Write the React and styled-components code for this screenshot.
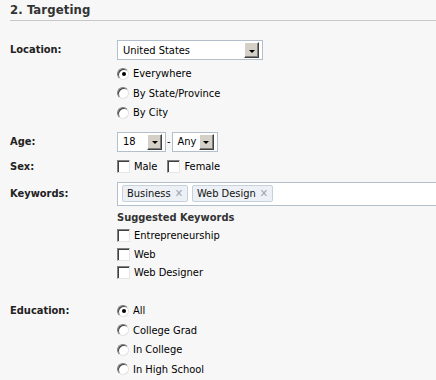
import React from 'react';
import styled, { createGlobalStyle } from 'styled-components';

const GlobalStyle = createGlobalStyle`
  html, body {
    margin: 0;
    padding: 0;
    background: #f7f7f7;
  }
  body {
    font-family: "DejaVu Sans Condensed", "DejaVu Sans", sans-serif;
    font-size: 11px;
    color: #000;
  }
`;

const Page = styled.div`
  width: 436px;
  height: 380px;
  overflow: hidden;
  padding-left: 10px;
  box-sizing: border-box;
`;

const Heading = styled.h2`
  margin: 0;
  padding-top: 2px;
  height: 18px;
  font-size: 13px;
  font-weight: bold;
  color: #333;
  letter-spacing: 0.1px;
  border-bottom: 1px solid #c8c8c8;
`;

const Form = styled.div`
  display: flex;
  flex-direction: column;
  padding-top: 19px;
`;

const Row = styled.div`
  display: flex;
  align-items: flex-start;
  margin-top: ${p => p.$gap || 0}px;
`;

const Label = styled.div`
  width: 107px;
  flex: none;
  font-weight: bold;
  color: #222;
  line-height: ${p => p.$line || 16}px;
`;

const Controls = styled.div`
  display: flex;
  flex-direction: column;
  flex: 1;
  min-width: 0;
`;

const Inline = styled.div`
  display: flex;
  align-items: center;
  height: ${p => p.$h || 16}px;
`;

const SelectBox = styled.div`
  display: flex;
  align-items: center;
  justify-content: space-between;
  box-sizing: border-box;
  width: ${p => p.$w}px;
  height: 20px;
  border: 1px solid #b3c0cc;
  background: #fff;
  padding: 0 3px 0 5px;
`;

const DropButton = styled.div`
  width: 15px;
  height: 16px;
  box-sizing: border-box;
  background: #d4d0c8;
  border-top: 1px solid #fff;
  border-left: 1px solid #fff;
  border-right: 1px solid #404040;
  border-bottom: 1px solid #404040;
  box-shadow: inset -1px -1px 0 #808080;
  display: flex;
  align-items: center;
  justify-content: center;
  &::after {
    content: '';
    width: 0;
    height: 0;
    margin-top: 2px;
    border-left: 3px solid transparent;
    border-right: 3px solid transparent;
    border-top: 3px solid #000;
  }
`;

const Dash = styled.span`
  margin: 0 1px;
`;

const OptionList = styled.div`
  display: flex;
  flex-direction: column;
  margin-top: ${p => p.$gap || 0}px;
`;

const Option = styled.label`
  display: flex;
  align-items: center;
  gap: 4px;
  height: ${p => p.$h || 19.5}px;
  margin-right: ${p => p.$mr || 0}px;
`;

const Radio = styled.span`
  width: 12px;
  height: 12px;
  box-sizing: border-box;
  border-radius: 50%;
  background: #fff;
  border: 1px solid;
  border-color: #7a7a7a #e2e2e2 #e2e2e2 #7a7a7a;
  box-shadow: inset 1px 1px 0 #404040;
  display: flex;
  align-items: center;
  justify-content: center;
  flex: none;
  &::after {
    content: '';
    display: ${p => (p.$on ? 'block' : 'none')};
    width: 4px;
    height: 4px;
    border-radius: 50%;
    background: #000;
    margin: 1px 0 0 1px;
  }
`;

const Check = styled.span`
  width: 13px;
  height: 13px;
  box-sizing: border-box;
  background: #fff;
  border: 1px solid;
  border-color: #808080 #e6e6e6 #e6e6e6 #808080;
  box-shadow: inset 1px 1px 0 #404040;
  flex: none;
`;

const TagInput = styled.div`
  display: flex;
  align-items: center;
  gap: 4px;
  box-sizing: border-box;
  height: 24px;
  margin-right: -1px;
  border: 1px solid #b3c0cc;
  background: #fff;
  padding: 0 4px;
`;

const Tag = styled.span`
  display: flex;
  align-items: center;
  gap: 4px;
  height: 17px;
  box-sizing: border-box;
  padding: 0 4px;
  border: 1px solid #c5d1dd;
  border-radius: 2px;
  background: #edf1f6;
  color: #111;
`;

const TagX = styled.span`
  color: #9aa6b3;
  font-size: 11px;
  font-weight: bold;
`;

const SubHeading = styled.div`
  font-weight: bold;
  color: #333;
  line-height: 16px;
  margin-top: 4px;
`;

const Spacer = styled.div`
  height: ${p => p.$h}px;
`;

const location = ['Everywhere', 'By State/Province', 'By City'];
const suggested = ['Entrepreneurship', 'Web', 'Web Designer'];
const education = ['All', 'College Grad', 'In College', 'In High School'];

export default function App() {
  return (
    <Page>
      <GlobalStyle />
      <Heading>2. Targeting</Heading>
      <Form>
        <Row>
          <Label $line={20}>Location:</Label>
          <Controls>
            <SelectBox $w={146}>
              <span>United States</span>
              <DropButton />
            </SelectBox>
            <OptionList $gap={4}>
              {location.map((o, i) => (
                <Option key={o}>
                  <Radio $on={i === 0} />
                  {o}
                </Option>
              ))}
            </OptionList>
          </Controls>
        </Row>

        <Row $gap={9}>
          <Label $line={20}>Age:</Label>
          <Inline $h={20}>
            <SelectBox $w={49}>
              <span>18</span>
              <DropButton />
            </SelectBox>
            <Dash>-</Dash>
            <SelectBox $w={46}>
              <span>Any</span>
              <DropButton />
            </SelectBox>
          </Inline>
        </Row>

        <Row $gap={7}>
          <Label>Sex:</Label>
          <Inline>
            <Option $h={16} $mr={10}>
              <Check />
              Male
            </Option>
            <Option $h={16}>
              <Check />
              Female
            </Option>
          </Inline>
        </Row>

        <Row $gap={7}>
          <Label $line={24}>Keywords:</Label>
          <Controls>
            <TagInput>
              <Tag>
                Business <TagX>✕</TagX>
              </Tag>
              <Tag>
                Web Design <TagX>✕</TagX>
              </Tag>
            </TagInput>
            <SubHeading>Suggested Keywords</SubHeading>
            <OptionList $gap={1}>
              {suggested.map(o => (
                <Option key={o} $h={18.5}>
                  <Check />
                  {o}
                </Option>
              ))}
            </OptionList>
            <Spacer $h={19} />
          </Controls>
        </Row>

        <Row>
          <Label $line={19.5}>Education:</Label>
          <OptionList>
            {education.map((o, i) => (
              <Option key={o}>
                <Radio $on={i === 0} />
                {o}
              </Option>
            ))}
          </OptionList>
        </Row>
      </Form>
    </Page>
  );
}
